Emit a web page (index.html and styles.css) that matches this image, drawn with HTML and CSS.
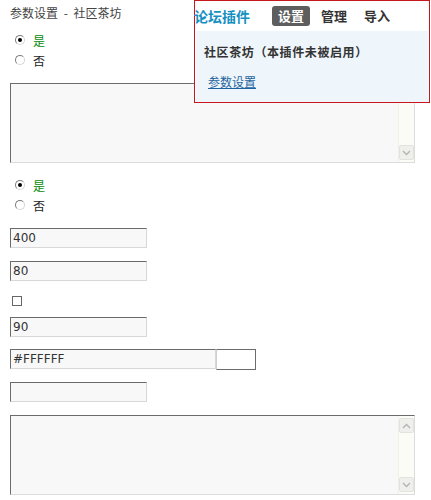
FILE: index.html
```html
<!DOCTYPE html>
<html lang="zh-CN">
<head>
<meta charset="utf-8">
<title>参数设置 - 社区茶坊</title>
<link rel="stylesheet" href="styles.css">
</head>
<body>
<div class="page">
  <div class="title">参数设置 - 社区茶坊</div>

  <div class="radios">
    <label class="opt yes"><span class="radio on"></span>是</label>
    <label class="opt"><span class="radio"></span>否</label>
  </div>

  <div class="area">
    <textarea class="area-text"></textarea>
    <div class="scrollbar">
      <span class="sb-btn"><svg width="9" height="6" viewBox="0 0 9 6"><polyline points="1,5 4.5,1.5 8,5" fill="none" stroke="#b4b4b4" stroke-width="1.4"/></svg></span>
      <span class="sb-track"></span>
      <span class="sb-btn"><svg width="9" height="6" viewBox="0 0 9 6"><polyline points="1,1 4.5,4.5 8,1" fill="none" stroke="#b4b4b4" stroke-width="1.4"/></svg></span>
    </div>
  </div>

  <div class="radios second">
    <label class="opt yes"><span class="radio on"></span>是</label>
    <label class="opt"><span class="radio"></span>否</label>
  </div>

  <input class="field f-first" type="text" value="400">
  <input class="field" type="text" value="80">
  <div class="check-row"><span class="checkbox"></span></div>
  <input class="field f-after-check" type="text" value="90">
  <div class="color-row">
    <input class="field wide" type="text" value="#FFFFFF">
    <span class="swatch"></span>
  </div>
  <input class="field f-after-color" type="text" value="">

  <div class="area area-last">
    <textarea class="area-text"></textarea>
    <div class="scrollbar">
      <span class="sb-btn"><svg width="9" height="6" viewBox="0 0 9 6"><polyline points="1,5 4.5,1.5 8,5" fill="none" stroke="#b4b4b4" stroke-width="1.4"/></svg></span>
      <span class="sb-track"></span>
      <span class="sb-btn"><svg width="9" height="6" viewBox="0 0 9 6"><polyline points="1,1 4.5,4.5 8,1" fill="none" stroke="#b4b4b4" stroke-width="1.4"/></svg></span>
    </div>
  </div>
</div>

<div class="popup">
  <div class="popup-head">
    <span class="popup-title">论坛插件</span>
    <nav class="tabs">
      <span class="tab active">设置</span>
      <span class="tab">管理</span>
      <span class="tab">导入</span>
    </nav>
  </div>
  <div class="popup-body">
    <div class="plugin-name">社区茶坊（本插件未被启用）</div>
    <a class="plugin-link" href="#">参数设置</a>
  </div>
</div>
</body>
</html>
```

FILE: styles.css
```css
body {
  margin: 0;
  background: #fff;
  color: #333;
  font: 12px "Noto Sans CJK SC", "Noto Sans", sans-serif;
  text-spacing-trim: space-all;
}

.page {
  padding-left: 10px;
}

.title {
  padding-top: 6px;
  height: 14px;
  line-height: 14px;
  margin-bottom: 10px;
  color: #444;
  word-spacing: 3px;
}

.radios .opt {
  display: flex;
  align-items: center;
  gap: 8px;
  height: 20px;
  padding-left: 5px;
  color: #222;
}

.radios .opt.yes {
  color: #0a8a0a;
}

.radios.second {
  margin-top: 12px;
}

.radio {
  width: 10px;
  height: 10px;
  box-sizing: border-box;
  border-radius: 50%;
  border: 1px solid;
  border-color: #7a7a7a #d6d6d6 #d6d6d6 #7a7a7a;
  background: #fff;
  display: flex;
  align-items: center;
  justify-content: center;
}

.radio.on::after {
  content: "";
  width: 4px;
  height: 4px;
  border-radius: 50%;
  background: #000;
}

.area {
  margin-top: 13px;
  width: 405px;
  height: 80px;
  box-sizing: border-box;
  border: 1px solid;
  border-color: #6b6b6b #dcdcdc #dcdcdc #6b6b6b;
  background: #f8f8f8;
  display: flex;
}

.area-last {
  margin-top: 13px;
}

.area-text {
  flex: 1;
  border: 0;
  margin: 0;
  padding: 2px;
  resize: none;
  overflow: hidden;
  background: transparent;
  outline: none;
}

.scrollbar {
  width: 16px;
  display: flex;
  flex-direction: column;
  background: #fcfcf7;
  border-left: 1px solid #f0f0ea;
  padding: 2px 0;
  box-sizing: border-box;
}

.sb-btn {
  width: 15px;
  height: 15px;
  box-sizing: border-box;
  border: 1px solid #e2e2de;
  border-radius: 2px;
  background: #efefec;
  display: flex;
  align-items: center;
  justify-content: center;
}

.sb-track {
  flex: 1;
}

.field {
  display: block;
  margin: 13px 0 0;
  width: 137px;
  height: 20px;
  box-sizing: border-box;
  border: 1px solid;
  border-color: #6b6b6b #d8d8d8 #d8d8d8 #6b6b6b;
  background: #f8f8f8;
  padding: 0 2px;
  color: #333;
  font: 12px "DejaVu Sans", Verdana, sans-serif;
  outline: none;
}

.f-first {
  margin-top: 13px;
}

.check-row {
  margin-top: 15px;
  height: 10px;
  padding-left: 2px;
  display: flex;
}

.checkbox {
  width: 10px;
  height: 10px;
  box-sizing: border-box;
  border: 1px solid #666;
  background: #fff;
}

.f-after-check {
  margin-top: 11px;
}

.color-row {
  margin-top: 12px;
  display: flex;
  align-items: flex-start;
}

.field.wide {
  margin: 0;
  width: 206px;
}

.swatch {
  width: 40px;
  height: 21px;
  box-sizing: border-box;
  border: 1px solid #6b6b6b;
  border-left-color: #cfcfcf;
  background: #fff;
}

.f-after-color {
  margin-top: 12px;
}

/* Popup menu overlay */
.popup {
  position: absolute;
  top: 0;
  left: 194px;
  width: 236px;
  height: 103px;
  box-sizing: border-box;
  border: 1px solid #c8161d;
  background: #fff;
  display: flex;
  flex-direction: column;
}

.popup-head {
  height: 30px;
  display: flex;
  align-items: center;
  gap: 22px;
}

.popup-title {
  margin-left: -1px;
  font-size: 14px;
  font-weight: 700;
  color: #1590c2;
  line-height: 16px;
}

.tabs {
  display: flex;
  gap: 5px;
}

.tab {
  padding: 0 6px;
  height: 20px;
  line-height: 20px;
  font-size: 13px;
  font-weight: 700;
  color: #333;
  border-radius: 3px;
}

.tab.active {
  background: #5e5e5e;
  color: #fff;
}

.popup-body {
  flex: 1;
  margin: 0 1px 0 1px;
  background: #eef6fb;
  padding: 13px 0 0 8px;
}

.plugin-name {
  font-weight: 700;
  color: #333;
  line-height: 16px;
  letter-spacing: 0.6px;
}

.plugin-link {
  display: inline-block;
  margin: 14px 0 0 4px;
  line-height: 16px;
  color: #1e64a0;
  text-decoration: underline;
}
```
